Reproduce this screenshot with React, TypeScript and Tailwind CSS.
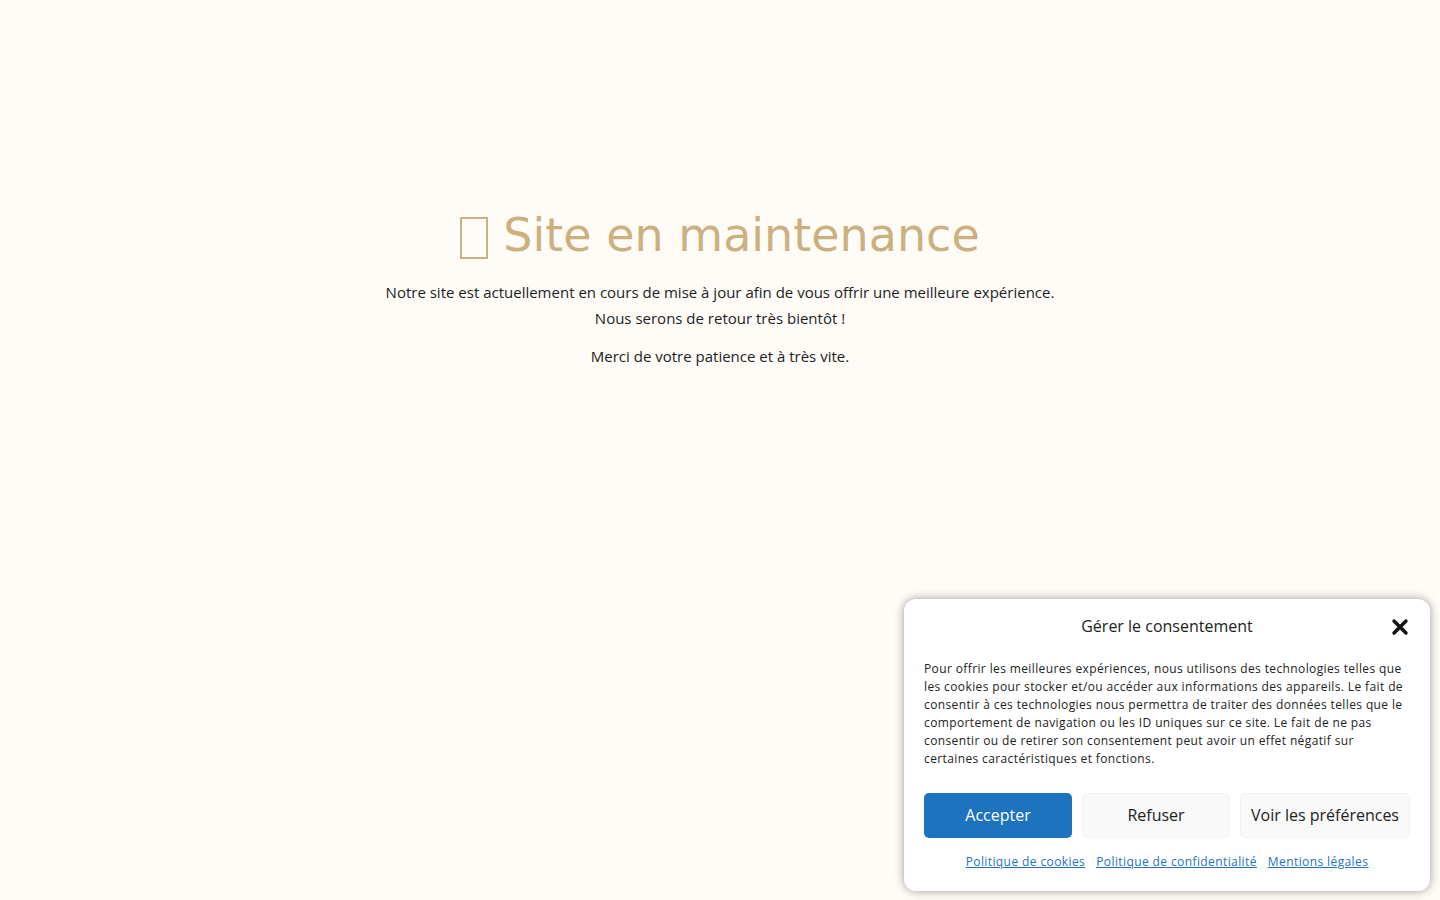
import React from "react";

export default function App() {
  return (
    <div className="relative min-h-[900px] w-full bg-[#fffcf8]" style={{ fontFamily: '"DejaVu Sans", sans-serif' }}>
      <div className="flex flex-col items-center pt-[205px] text-center">
        <h1 className="flex items-center text-[46px] leading-[60px] text-[#cdb07f]" style={{ fontFamily: '"DejaVu Sans", sans-serif' }}>
          <span className="mr-[15px] inline-block h-[42px] w-[28px] border-[2px] border-[#cdb07f] translate-y-[3px]" aria-hidden="true"></span>
          <span>Site en maintenance</span>
        </h1>
        <div className="mt-[14px] text-[15px] leading-[26px] text-[#1d1d1d]" style={{ fontFamily: '"Open Sans", sans-serif' }}>
          <p>Notre site est actuellement en cours de mise à jour afin de vous offrir une meilleure expérience.</p>
          <p>Nous serons de retour très bientôt !</p>
          <p className="mt-[12px]">Merci de votre patience et à très vite.</p>
        </div>
      </div>

      <div className="absolute left-[904px] top-[599px] w-[526px] rounded-[12px] bg-white px-[20px] pb-[20px] pt-[15px] shadow-[0_0_10px_rgba(0,0,0,0.4)]">
        <div className="relative flex h-[24px] items-center justify-center" style={{ fontFamily: '"Open Sans", sans-serif' }}>
          <span className="text-[16px] text-[#222]">Gérer le consentement</span>
          <button className="absolute right-[0px] top-[3px] flex h-[20px] w-[20px] items-center justify-center text-[#111]" aria-label="Fermer">
            <svg width="18" height="18" viewBox="0 0 18 18">
              <path d="M3 3 L15 15 M15 3 L3 15" stroke="#111" strokeWidth="3.4" strokeLinecap="round" />
            </svg>
          </button>
        </div>
        <p className="mt-[22px] text-[12px] leading-[18px] tracking-[0.38px] text-[#222]" style={{ fontFamily: '"Open Sans", sans-serif' }}>
          Pour offrir les meilleures expériences, nous utilisons des technologies telles que les cookies pour stocker et/ou accéder aux informations des appareils. Le fait de consentir à ces technologies nous permettra de traiter des données telles que le comportement de navigation ou les ID uniques sur ce site. Le fait de ne pas consentir ou de retirer son consentement peut avoir un effet négatif sur certaines caractéristiques et fonctions.
        </p>
        <div className="mt-[25px] flex gap-[10px]" style={{ fontFamily: '"Open Sans", sans-serif' }}>
          <button className="h-[45px] w-[148px] rounded-[5px] bg-[#1e73be] pb-[2px] text-[16px] text-white">Accepter</button>
          <button className="h-[45px] w-[148px] rounded-[5px] border border-[#f2f2f2] bg-[#f9f9f9] pb-[2px] text-[16px] text-[#222]">Refuser</button>
          <button className="h-[45px] w-[170px] rounded-[5px] border border-[#f2f2f2] bg-[#f9f9f9] pb-[2px] text-[16px] text-[#222]">Voir les préférences</button>
        </div>
        <div className="mt-[15px] flex justify-center gap-[11px] text-[12px] leading-[18px] tracking-[0.4px] text-[#1e73be] underline" style={{ fontFamily: '"Open Sans", sans-serif' }}>
          <a href="#">Politique de cookies</a>
          <a href="#">Politique de confidentialité</a>
          <a href="#">Mentions légales</a>
        </div>
      </div>
    </div>
  );
}
